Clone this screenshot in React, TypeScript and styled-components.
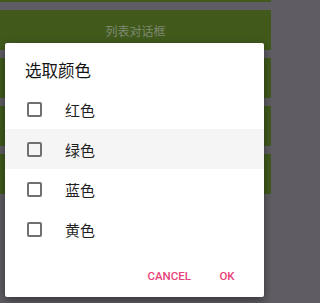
import React, { useState } from "react";
import styled, { createGlobalStyle } from "styled-components";

const GlobalStyle = createGlobalStyle`
  html, body {
    margin: 0;
    padding: 0;
    background: #5f5d63;
  }
  * {
    box-sizing: border-box;
  }
`;

const Screen = styled.div`
  position: relative;
  width: 271px;
  height: 303px;
  overflow: hidden;
  background: #5f5d63;
  font-family: Roboto, "Noto Sans CJK SC", sans-serif;
`;

const ButtonList = styled.div`
  display: flex;
  flex-direction: column;
  gap: 8px;
  margin-top: -38px;
`;

const DemoButton = styled.div`
  height: 40px;
  display: flex;
  align-items: center;
  justify-content: center;
  background: #415a1c;
  color: #7e8870;
  font-size: 12px;
`;

const Dialog = styled.div`
  position: absolute;
  left: 5px;
  top: 43px;
  width: 259px;
  height: 254px;
  background: #ffffff;
  border-radius: 2px;
  box-shadow: 0 3px 10px rgba(0, 0, 0, 0.45);
  display: flex;
  flex-direction: column;
`;

const Title = styled.div`
  padding: 19px 0 0 20px;
  height: 46px;
  line-height: 20px;
  font-size: 16.5px;
  color: #141414;
`;

const Options = styled.div`
  display: flex;
  flex-direction: column;
`;

const Option = styled.div<{ $active?: boolean }>`
  height: 40px;
  display: flex;
  align-items: center;
  padding-left: 22px;
  background: ${(p) => (p.$active ? "#f5f5f5" : "transparent")};
  cursor: pointer;
`;

const Box = styled.span<{ $checked?: boolean }>`
  width: 15px;
  height: 15px;
  border: 2px solid #707070;
  border-radius: 2px;
  background: ${(p) => (p.$checked ? "#e91e63" : "transparent")};
  border-color: ${(p) => (p.$checked ? "#e91e63" : "#707070")};
`;

const Label = styled.span`
  margin-left: 23px;
  font-size: 15px;
  color: #1f1f1f;
`;

const Actions = styled.div`
  display: flex;
  justify-content: flex-end;
  align-items: center;
  gap: 6px;
  padding: 6px 15px 0 0;
  height: 48px;
`;

const TextButton = styled.button`
  border: 0;
  background: none;
  padding: 0 8px;
  min-width: 44px;
  height: 32px;
  font-family: Roboto, sans-serif;
  font-size: 11.5px;
  font-weight: 500;
  color: #e8437b;
  cursor: pointer;
`;

const colors = ["红色", "绿色", "蓝色", "黄色"];

const App = () => {
  const [checked, setChecked] = useState<boolean[]>([false, false, false, false]);

  const toggle = (i: number) => {
    setChecked(checked.map((c, idx) => (idx === i ? !c : c)));
  };

  return (
    <Screen>
      <GlobalStyle />
      <ButtonList>
        <DemoButton />
        <DemoButton>列表对话框</DemoButton>
        <DemoButton />
        <DemoButton />
        <DemoButton />
      </ButtonList>
      <Dialog>
        <Title>选取颜色</Title>
        <Options>
          {colors.map((name, i) => (
            <Option key={name} $active={i === 1} onClick={() => toggle(i)}>
              <Box $checked={checked[i]} />
              <Label>{name}</Label>
            </Option>
          ))}
        </Options>
        <Actions>
          <TextButton>CANCEL</TextButton>
          <TextButton>OK</TextButton>
        </Actions>
      </Dialog>
    </Screen>
  );
};

export default App;
